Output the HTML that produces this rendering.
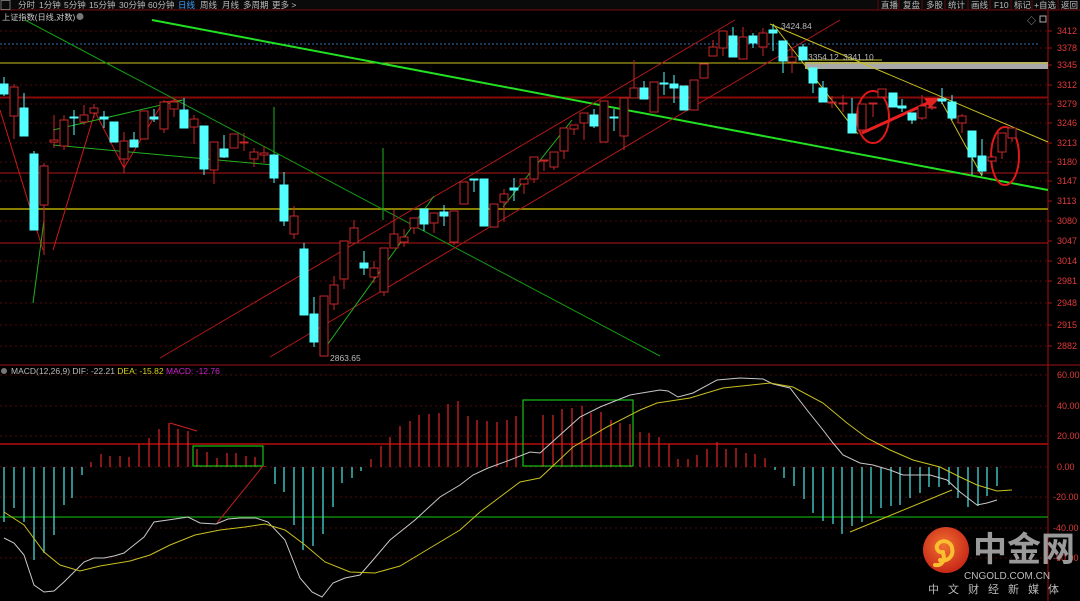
<!DOCTYPE html>
<html><head><meta charset="utf-8"><style>
html,body{margin:0;padding:0;background:#000;width:1080px;height:601px;overflow:hidden;font-family:"Liberation Sans","Noto Sans CJK SC",sans-serif}
svg{position:absolute;left:0;top:0}
.t{font-family:"Liberation Sans","Noto Sans CJK SC",sans-serif}
</style></head><body>
<svg width="1080" height="601" viewBox="0 0 1080 601" xmlns="http://www.w3.org/2000/svg">
<rect width="1080" height="601" fill="#000"/>
<rect x="0" y="0" width="1080" height="10" fill="#0a0a0a"/>
<line x1="0" y1="10" x2="1080" y2="10" stroke="#7a0c0c" stroke-width="1"/>
<rect x="1" y="0.5" width="9" height="9" fill="none" stroke="#888" stroke-width="0.8"/>
<g class="t" font-size="8.5" fill="#bbb">
<text x="18" y="8">分时</text><text x="39" y="8">1分钟</text><text x="64" y="8">5分钟</text><text x="89" y="8">15分钟</text><text x="119" y="8">30分钟</text><text x="148" y="8">60分钟</text>
<text x="178" y="8" fill="#3aa0ff">日线</text><text x="200" y="8">周线</text><text x="222" y="8">月线</text><text x="243" y="8">多周期</text><text x="272" y="8">更多 &gt;</text>
<text x="881" y="8">直播</text><text x="903" y="8">复盘</text><text x="926" y="8">多股</text><text x="948" y="8">统计</text><text x="971" y="8">画线</text><text x="994" y="8">F10</text><text x="1014" y="8">标记</text><text x="1034" y="8">+自选</text><text x="1061" y="8">返回</text>
</g>
<g stroke="#5a0a0a" stroke-width="1"><line x1="878" y1="0" x2="878" y2="10"/><line x1="899" y1="0" x2="899" y2="10"/><line x1="922" y1="0" x2="922" y2="10"/><line x1="945" y1="0" x2="945" y2="10"/><line x1="968" y1="0" x2="968" y2="10"/><line x1="990" y1="0" x2="990" y2="10"/><line x1="1011" y1="0" x2="1011" y2="10"/><line x1="1032" y1="0" x2="1032" y2="10"/><line x1="1058" y1="0" x2="1058" y2="10"/></g>
<text class="t" x="2" y="20" font-size="8.2" fill="#ccc">上证指数(日线,对数)</text>
<circle cx="80" cy="16.5" r="3.5" fill="#777"/>
<line x1="1048" y1="10" x2="1048" y2="601" stroke="#a01010" stroke-width="1"/>
<line x1="0" y1="365" x2="1080" y2="365" stroke="#a01010" stroke-width="1"/>
<text x="1027" y="24" font-size="9" fill="#aaa">◇</text><rect x="1040" y="16" width="6" height="6" fill="none" stroke="#aaa" stroke-width="1"/>
<g stroke="#6a0e0e" stroke-width="0.8" stroke-dasharray="2,3">
<line x1="0" y1="31" x2="1048" y2="31"/><line x1="0" y1="48" x2="1048" y2="48"/><line x1="0" y1="85" x2="1048" y2="85"/><line x1="0" y1="104" x2="1048" y2="104"/><line x1="0" y1="123" x2="1048" y2="123"/><line x1="0" y1="143" x2="1048" y2="143"/><line x1="0" y1="162" x2="1048" y2="162"/><line x1="0" y1="181" x2="1048" y2="181"/><line x1="0" y1="221" x2="1048" y2="221"/><line x1="0" y1="261" x2="1048" y2="261"/><line x1="0" y1="281" x2="1048" y2="281"/><line x1="0" y1="303" x2="1048" y2="303"/><line x1="0" y1="325" x2="1048" y2="325"/><line x1="0" y1="346" x2="1048" y2="346"/>
<line x1="0" y1="375" x2="1048" y2="375"/><line x1="0" y1="406" x2="1048" y2="406"/><line x1="0" y1="436" x2="1048" y2="436"/><line x1="0" y1="467" x2="1048" y2="467"/><line x1="0" y1="497" x2="1048" y2="497"/><line x1="0" y1="528" x2="1048" y2="528"/><line x1="0" y1="558" x2="1048" y2="558"/>
</g>
<line x1="0" y1="44" x2="1040" y2="44" stroke="#2a5a8a" stroke-width="1.2" stroke-dasharray="2,2"/>
<g class="t" font-size="9" fill="#e03a3a">
<text x="1057" y="34">3412</text><text x="1057" y="51">3378</text><text x="1057" y="68">3345</text><text x="1057" y="88">3312</text><text x="1057" y="107">3279</text><text x="1057" y="126">3246</text><text x="1057" y="146">3213</text><text x="1057" y="165">3180</text><text x="1057" y="184">3147</text><text x="1057" y="204">3113</text><text x="1057" y="224">3080</text><text x="1057" y="244">3047</text><text x="1057" y="264">3014</text><text x="1057" y="284">2981</text><text x="1057" y="306">2948</text><text x="1057" y="328">2915</text><text x="1057" y="349">2882</text>
<text x="1057" y="378">60.00</text><text x="1057" y="409">40.00</text><text x="1057" y="439">20.00</text><text x="1057" y="470">0.00</text><text x="1053" y="500">-20.00</text><text x="1053" y="531">-40.00</text><text x="1053" y="561">-60.00</text>
</g>
<g stroke="#a01010"><line x1="1048" y1="31" x2="1052" y2="31"/><line x1="1048" y1="48" x2="1052" y2="48"/><line x1="1048" y1="65" x2="1052" y2="65"/><line x1="1048" y1="85" x2="1052" y2="85"/><line x1="1048" y1="104" x2="1052" y2="104"/><line x1="1048" y1="123" x2="1052" y2="123"/><line x1="1048" y1="143" x2="1052" y2="143"/><line x1="1048" y1="162" x2="1052" y2="162"/><line x1="1048" y1="181" x2="1052" y2="181"/><line x1="1048" y1="201" x2="1052" y2="201"/><line x1="1048" y1="221" x2="1052" y2="221"/><line x1="1048" y1="241" x2="1052" y2="241"/><line x1="1048" y1="261" x2="1052" y2="261"/><line x1="1048" y1="281" x2="1052" y2="281"/><line x1="1048" y1="303" x2="1052" y2="303"/><line x1="1048" y1="325" x2="1052" y2="325"/><line x1="1048" y1="346" x2="1052" y2="346"/></g>
<rect x="805" y="62" width="243" height="7" fill="#a8a8a8"/>
<line x1="0" y1="63" x2="1048" y2="63" stroke="#c8c020" stroke-width="1"/>
<line x1="0" y1="97.5" x2="1048" y2="97.5" stroke="#8a0a0a" stroke-width="2"/>
<line x1="0" y1="173" x2="1048" y2="173" stroke="#b01818" stroke-width="1"/>
<line x1="0" y1="209" x2="1048" y2="209" stroke="#8a8000" stroke-width="2"/>
<line x1="0" y1="243" x2="1048" y2="243" stroke="#b01818" stroke-width="1"/>
<line x1="152" y1="20" x2="1048" y2="190" stroke="#22e022" stroke-width="2"/>
<line x1="25" y1="20" x2="660" y2="356" stroke="#139a13" stroke-width="1"/>
<line x1="160" y1="358" x2="735" y2="20" stroke="#b01818" stroke-width="1"/>
<line x1="270" y1="357" x2="840" y2="20" stroke="#b01818" stroke-width="1"/>
<g stroke="#d01818" stroke-width="1" fill="none"><polyline points="0,110 43,250"/><polyline points="53,250 95,112 124,168 163,102 182,100"/></g>
<g stroke="#20b020" stroke-width="1" fill="none">
<line x1="53" y1="130" x2="183" y2="100"/><line x1="53" y1="145" x2="273" y2="165"/><line x1="33" y1="303" x2="44" y2="220"/>
<line x1="274" y1="107" x2="274" y2="155"/><line x1="383" y1="148" x2="383" y2="220"/>
<line x1="320" y1="355" x2="434" y2="196"/><line x1="503" y1="207" x2="572" y2="120"/>
</g>
<g stroke="#c8c020" stroke-width="1" fill="none">
<line x1="770" y1="24" x2="1048" y2="142"/><polyline points="773,24 858,134"/><polyline points="940,99 982,176"/><line x1="803" y1="60" x2="882" y2="60"/>
</g>
<ellipse cx="873" cy="117" rx="16" ry="26" fill="none" stroke="#e01818" stroke-width="2"/>
<ellipse cx="1005" cy="156" rx="14" ry="29" fill="none" stroke="#e01818" stroke-width="2"/>
<line x1="862" y1="133" x2="930" y2="102" stroke="#e82020" stroke-width="3"/>
<polygon points="940,98 924,98 930,108" fill="#e82020"/>
<g class="t" font-size="8.5" fill="#bbb"><text x="781" y="29">3424.84</text><text x="330" y="361">2863.65</text><text x="808" y="60">3354.12</text><text x="843" y="60">3341.10</text></g>
<g stroke="#c8282a" stroke-width="1" fill="#000">
<line x1="14" y1="84" x2="14" y2="139"/><rect x="10" y="87" width="8" height="29"/>
<line x1="44" y1="163" x2="44" y2="255"/><rect x="40" y="166" width="8" height="39"/>
<line x1="54" y1="115" x2="54" y2="148"/><rect x="50" y="140" width="8" height="2"/>
<line x1="64" y1="115" x2="64" y2="150"/><rect x="60" y="120" width="8" height="26"/>
<line x1="84" y1="105" x2="84" y2="125"/><rect x="80" y="115" width="8" height="7"/>
<line x1="94" y1="104" x2="94" y2="118"/><rect x="90" y="108" width="8" height="5"/>
<line x1="124" y1="132" x2="124" y2="173"/><rect x="120" y="141" width="8" height="18"/>
<rect x="140" y="111" width="8" height="28"/>
<line x1="164" y1="100" x2="164" y2="133"/><rect x="160" y="102" width="8" height="27"/>
<line x1="174" y1="98" x2="174" y2="117"/><rect x="170" y="102" width="8" height="7"/>
<line x1="194" y1="115" x2="194" y2="144"/><rect x="190" y="119" width="8" height="8"/>
<line x1="214" y1="142" x2="214" y2="184"/><rect x="210" y="142" width="8" height="28"/>
<rect x="230" y="134" width="8" height="14"/>
<line x1="244" y1="133" x2="244" y2="151"/><rect x="240" y="142" width="8" height="1"/>
<line x1="254" y1="148" x2="254" y2="167"/><rect x="250" y="152" width="8" height="7"/>
<line x1="264" y1="146" x2="264" y2="163"/><rect x="260" y="153" width="8" height="2"/>
<line x1="294" y1="206" x2="294" y2="239"/><rect x="290" y="216" width="8" height="18"/>
<rect x="320" y="296" width="8" height="60"/>
<line x1="334" y1="276" x2="334" y2="310"/><rect x="330" y="285" width="8" height="19"/>
<line x1="344" y1="241" x2="344" y2="289"/><rect x="340" y="241" width="8" height="38"/>
<line x1="354" y1="220" x2="354" y2="243"/><rect x="350" y="228" width="8" height="15"/>
<line x1="374" y1="261" x2="374" y2="283"/><rect x="370" y="268" width="8" height="9"/>
<line x1="384" y1="248" x2="384" y2="296"/><rect x="380" y="248" width="8" height="44"/>
<line x1="394" y1="210" x2="394" y2="248"/><rect x="390" y="234" width="8" height="14"/>
<line x1="404" y1="229" x2="404" y2="247"/><rect x="400" y="237" width="8" height="5"/>
<line x1="414" y1="218" x2="414" y2="234"/><rect x="410" y="218" width="8" height="10"/>
<line x1="434" y1="213" x2="434" y2="233"/><rect x="430" y="213" width="8" height="10"/>
<line x1="454" y1="211" x2="454" y2="245"/><rect x="450" y="211" width="8" height="31"/>
<rect x="460" y="182" width="8" height="22"/>
<rect x="490" y="204" width="8" height="23"/>
<line x1="504" y1="189" x2="504" y2="222"/><rect x="500" y="194" width="8" height="8"/>
<line x1="524" y1="179" x2="524" y2="194"/><rect x="520" y="179" width="8" height="5"/>
<line x1="534" y1="157" x2="534" y2="183"/><rect x="530" y="157" width="8" height="22"/>
<line x1="544" y1="160" x2="544" y2="171"/><rect x="540" y="160" width="8" height="1"/>
<line x1="554" y1="152" x2="554" y2="170"/><rect x="550" y="152" width="8" height="15"/>
<line x1="564" y1="128" x2="564" y2="159"/><rect x="560" y="128" width="8" height="23"/>
<line x1="574" y1="125" x2="574" y2="135"/><rect x="570" y="125" width="8" height="4"/>
<line x1="584" y1="113" x2="584" y2="140"/><rect x="580" y="113" width="8" height="10"/>
<rect x="600" y="101" width="8" height="41"/>
<line x1="624" y1="98" x2="624" y2="150"/><rect x="620" y="98" width="8" height="38"/>
<line x1="634" y1="60" x2="634" y2="98"/><rect x="630" y="88" width="8" height="10"/>
<rect x="650" y="82" width="8" height="30"/>
<rect x="690" y="80" width="8" height="30"/>
<rect x="700" y="64" width="8" height="14"/>
<line x1="713" y1="40" x2="713" y2="56"/><rect x="709" y="47" width="8" height="9"/>
<line x1="723" y1="31" x2="723" y2="56"/><rect x="719" y="31" width="8" height="17"/>
<line x1="743" y1="27" x2="743" y2="59"/><rect x="739" y="37" width="8" height="22"/>
<line x1="763" y1="28" x2="763" y2="56"/><rect x="759" y="33" width="8" height="14"/>
<line x1="792" y1="48" x2="792" y2="73"/><rect x="788" y="57" width="8" height="5"/>
<line x1="832" y1="96" x2="832" y2="108"/><rect x="828" y="102" width="8" height="1"/>
<line x1="843" y1="95" x2="843" y2="112"/><rect x="839" y="103" width="8" height="1"/>
<line x1="862" y1="104" x2="862" y2="132"/><rect x="858" y="104" width="8" height="26"/>
<line x1="873" y1="103" x2="873" y2="117"/><rect x="869" y="103" width="8" height="1"/>
<rect x="878" y="89" width="8" height="8"/>
<line x1="922" y1="95" x2="922" y2="120"/><rect x="918" y="106" width="8" height="12"/>
<line x1="932" y1="100" x2="932" y2="110"/><rect x="928" y="107" width="8" height="1"/>
<line x1="962" y1="114" x2="962" y2="133"/><rect x="958" y="116" width="8" height="7"/>
<line x1="992" y1="155" x2="992" y2="165"/><rect x="988" y="157" width="8" height="4"/>
<line x1="1002" y1="133" x2="1002" y2="159"/><rect x="998" y="133" width="8" height="19"/>
<line x1="1012" y1="128" x2="1012" y2="142"/><rect x="1008" y="128" width="8" height="10"/>
</g>
<g stroke="#54ffff" stroke-width="1" fill="#54ffff">
<line x1="4" y1="77" x2="4" y2="96"/><rect x="0" y="84" width="8" height="10"/>
<line x1="24" y1="93" x2="24" y2="136"/><rect x="20" y="108" width="8" height="28"/>
<line x1="34" y1="151" x2="34" y2="230"/><rect x="30" y="154" width="8" height="76"/>
<line x1="74" y1="110" x2="74" y2="135"/><rect x="70" y="117" width="8" height="1"/>
<line x1="104" y1="111" x2="104" y2="128"/><rect x="100" y="117" width="8" height="2"/>
<rect x="110" y="122" width="8" height="20"/>
<line x1="134" y1="132" x2="134" y2="147"/><rect x="130" y="140" width="8" height="7"/>
<line x1="154" y1="109" x2="154" y2="122"/><rect x="150" y="117" width="8" height="2"/>
<line x1="184" y1="98" x2="184" y2="128"/><rect x="180" y="110" width="8" height="18"/>
<line x1="204" y1="126" x2="204" y2="175"/><rect x="200" y="126" width="8" height="43"/>
<line x1="224" y1="135" x2="224" y2="158"/><rect x="220" y="149" width="8" height="8"/>
<line x1="274" y1="155" x2="274" y2="183"/><rect x="270" y="155" width="8" height="23"/>
<line x1="284" y1="172" x2="284" y2="226"/><rect x="280" y="185" width="8" height="36"/>
<line x1="304" y1="243" x2="304" y2="315"/><rect x="300" y="249" width="8" height="66"/>
<line x1="314" y1="297" x2="314" y2="347"/><rect x="310" y="314" width="8" height="28"/>
<line x1="364" y1="251" x2="364" y2="275"/><rect x="360" y="263" width="8" height="5"/>
<line x1="424" y1="209" x2="424" y2="231"/><rect x="420" y="209" width="8" height="15"/>
<line x1="444" y1="205" x2="444" y2="226"/><rect x="440" y="212" width="8" height="4"/>
<line x1="474" y1="179" x2="474" y2="192"/><rect x="470" y="179" width="8" height="1"/>
<rect x="480" y="179" width="8" height="47"/>
<line x1="514" y1="178" x2="514" y2="201"/><rect x="510" y="188" width="8" height="2"/>
<line x1="594" y1="109" x2="594" y2="128"/><rect x="590" y="115" width="8" height="11"/>
<line x1="614" y1="109" x2="614" y2="131"/><rect x="610" y="117" width="8" height="1"/>
<line x1="644" y1="81" x2="644" y2="99"/><rect x="640" y="88" width="8" height="11"/>
<line x1="664" y1="72" x2="664" y2="95"/><rect x="660" y="83" width="8" height="1"/>
<line x1="674" y1="75" x2="674" y2="103"/><rect x="670" y="84" width="8" height="4"/>
<rect x="680" y="86" width="8" height="24"/>
<line x1="733" y1="27" x2="733" y2="57"/><rect x="729" y="36" width="8" height="21"/>
<line x1="753" y1="33" x2="753" y2="48"/><rect x="749" y="36" width="8" height="7"/>
<line x1="773" y1="25" x2="773" y2="51"/><rect x="769" y="30" width="8" height="3"/>
<line x1="783" y1="41" x2="783" y2="73"/><rect x="779" y="41" width="8" height="20"/>
<line x1="803" y1="44" x2="803" y2="60"/><rect x="799" y="47" width="8" height="13"/>
<line x1="813" y1="68" x2="813" y2="93"/><rect x="809" y="68" width="8" height="15"/>
<line x1="823" y1="81" x2="823" y2="102"/><rect x="819" y="88" width="8" height="14"/>
<line x1="852" y1="98" x2="852" y2="133"/><rect x="848" y="114" width="8" height="19"/>
<rect x="889" y="93" width="8" height="14"/>
<line x1="902" y1="99" x2="902" y2="112"/><rect x="898" y="106" width="8" height="2"/>
<line x1="912" y1="113" x2="912" y2="124"/><rect x="908" y="113" width="8" height="7"/>
<line x1="942" y1="88" x2="942" y2="104"/><rect x="938" y="99" width="8" height="2"/>
<line x1="952" y1="95" x2="952" y2="120"/><rect x="948" y="102" width="8" height="16"/>
<line x1="972" y1="131" x2="972" y2="175"/><rect x="968" y="131" width="8" height="26"/>
<line x1="982" y1="139" x2="982" y2="175"/><rect x="978" y="156" width="8" height="15"/>
</g>
<circle cx="4" cy="371" r="3" fill="#777"/>
<text class="t" x="11" y="374" font-size="8.5" fill="#bbb">MACD(12,26,9) DIF: -22.21 <tspan fill="#d8d020">DEA: -15.82</tspan> <tspan fill="#d020d0">MACD: -12.76</tspan></text>
<line x1="0" y1="444" x2="1048" y2="444" stroke="#8a0a0a" stroke-width="2"/>
<line x1="0" y1="517" x2="1048" y2="517" stroke="#10a010" stroke-width="1.2"/>
<g stroke="#48d8d8" stroke-width="1.3">
<line x1="4" y1="467" x2="4" y2="522"/><line x1="14" y1="467" x2="14" y2="508"/><line x1="24" y1="467" x2="24" y2="522"/><line x1="34" y1="467" x2="34" y2="560"/><line x1="44" y1="467" x2="44" y2="553"/><line x1="54" y1="467" x2="54" y2="535"/><line x1="64" y1="467" x2="64" y2="505"/><line x1="72" y1="467" x2="72" y2="498"/><line x1="82" y1="467" x2="82" y2="475"/>
<line x1="275" y1="467" x2="275" y2="484"/><line x1="284" y1="467" x2="284" y2="492"/><line x1="294" y1="467" x2="294" y2="525"/><line x1="303" y1="467" x2="303" y2="550"/><line x1="313" y1="467" x2="313" y2="546"/><line x1="323" y1="467" x2="323" y2="534"/><line x1="333" y1="467" x2="333" y2="507"/><line x1="342" y1="467" x2="342" y2="483"/><line x1="352" y1="467" x2="352" y2="478"/><line x1="361" y1="467" x2="361" y2="471"/>
<line x1="775" y1="467" x2="775" y2="470"/><line x1="784" y1="467" x2="784" y2="478"/><line x1="794" y1="467" x2="794" y2="486"/><line x1="804" y1="467" x2="804" y2="499"/><line x1="813" y1="467" x2="813" y2="513"/><line x1="823" y1="467" x2="823" y2="521"/><line x1="833" y1="467" x2="833" y2="524"/><line x1="842" y1="467" x2="842" y2="534"/><line x1="852" y1="467" x2="852" y2="526"/><line x1="862" y1="467" x2="862" y2="522"/><line x1="871" y1="467" x2="871" y2="514"/><line x1="881" y1="467" x2="881" y2="508"/><line x1="891" y1="467" x2="891" y2="506"/><line x1="900" y1="467" x2="900" y2="505"/><line x1="910" y1="467" x2="910" y2="498"/><line x1="920" y1="467" x2="920" y2="493"/><line x1="929" y1="467" x2="929" y2="487"/><line x1="939" y1="467" x2="939" y2="487"/><line x1="949" y1="467" x2="949" y2="485"/><line x1="958" y1="467" x2="958" y2="498"/><line x1="968" y1="467" x2="968" y2="507"/><line x1="978" y1="467" x2="978" y2="506"/><line x1="987" y1="467" x2="987" y2="496"/><line x1="997" y1="467" x2="997" y2="486"/>
</g>
<g stroke="#d02424" stroke-width="1.3">
<line x1="91" y1="467" x2="91" y2="462"/><line x1="101" y1="467" x2="101" y2="454"/><line x1="110" y1="467" x2="110" y2="456"/><line x1="120" y1="467" x2="120" y2="456"/><line x1="129" y1="467" x2="129" y2="457"/><line x1="139" y1="467" x2="139" y2="444"/><line x1="149" y1="467" x2="149" y2="438"/><line x1="159" y1="467" x2="159" y2="429"/><line x1="169" y1="467" x2="169" y2="423"/><line x1="178" y1="467" x2="178" y2="429"/><line x1="188" y1="467" x2="188" y2="431"/><line x1="197" y1="467" x2="197" y2="449"/><line x1="207" y1="467" x2="207" y2="452"/><line x1="217" y1="467" x2="217" y2="458"/><line x1="227" y1="467" x2="227" y2="453"/><line x1="236" y1="467" x2="236" y2="453"/><line x1="246" y1="467" x2="246" y2="456"/><line x1="255" y1="467" x2="255" y2="457"/><line x1="265" y1="467" x2="265" y2="466"/>
<line x1="371" y1="467" x2="371" y2="459"/><line x1="381" y1="467" x2="381" y2="446"/><line x1="390" y1="467" x2="390" y2="437"/><line x1="400" y1="467" x2="400" y2="426"/><line x1="410" y1="467" x2="410" y2="421"/><line x1="419" y1="467" x2="419" y2="415"/><line x1="429" y1="467" x2="429" y2="414"/><line x1="439" y1="467" x2="439" y2="413"/><line x1="448" y1="467" x2="448" y2="404"/><line x1="458" y1="467" x2="458" y2="401"/><line x1="468" y1="467" x2="468" y2="416"/><line x1="477" y1="467" x2="477" y2="420"/><line x1="487" y1="467" x2="487" y2="421"/><line x1="497" y1="467" x2="497" y2="422"/><line x1="507" y1="467" x2="507" y2="420"/><line x1="516" y1="467" x2="516" y2="416"/>
<line x1="543" y1="467" x2="543" y2="415"/><line x1="553" y1="467" x2="553" y2="415"/><line x1="562" y1="467" x2="562" y2="409"/><line x1="572" y1="467" x2="572" y2="408"/><line x1="582" y1="467" x2="582" y2="406"/><line x1="591" y1="467" x2="591" y2="413"/><line x1="601" y1="467" x2="601" y2="412"/><line x1="611" y1="467" x2="611" y2="420"/><line x1="620" y1="467" x2="620" y2="423"/><line x1="630" y1="467" x2="630" y2="424"/><line x1="640" y1="467" x2="640" y2="432"/><line x1="649" y1="467" x2="649" y2="433"/><line x1="659" y1="467" x2="659" y2="437"/><line x1="669" y1="467" x2="669" y2="444"/><line x1="678" y1="467" x2="678" y2="459"/><line x1="688" y1="467" x2="688" y2="459"/><line x1="697" y1="467" x2="697" y2="455"/><line x1="707" y1="467" x2="707" y2="449"/><line x1="717" y1="467" x2="717" y2="442"/><line x1="726" y1="467" x2="726" y2="449"/><line x1="736" y1="467" x2="736" y2="448"/><line x1="746" y1="467" x2="746" y2="453"/><line x1="755" y1="467" x2="755" y2="454"/><line x1="765" y1="467" x2="765" y2="458"/>
</g>
<rect x="193" y="446" width="70" height="20" fill="none" stroke="#18c018" stroke-width="1.2"/>
<rect x="523" y="400" width="110" height="66" fill="none" stroke="#18c018" stroke-width="1.2"/>
<line x1="170" y1="423" x2="197" y2="431" stroke="#d02020"/>
<line x1="217" y1="523" x2="263" y2="466" stroke="#c02020"/>
<line x1="850" y1="532" x2="952" y2="490" stroke="#c8c020"/>
<polyline fill="none" stroke="#c8c8c8" stroke-width="1" points="4,538 14,543 24,555 34,585 44,592 54,591 64,582 74,572 84,562 94,558 104,558 114,556 124,553 134,545 144,537 154,522 168,520 188,517 200,523 216,524 228,519 240,518 256,518 268,522 285,540 300,578 312,592 322,597 333,583 345,578 360,575 373,560 390,540 415,520 440,497 460,485 473,475 488,468 510,460 530,452 540,453 560,435 580,417 600,407 630,395 660,390 668,391 678,397 693,393 717,380 740,378 763,379 773,384 790,388 807,410 823,430 833,443 843,455 860,463 873,465 890,470 903,475 930,475 947,480 960,492 977,505 987,503 997,500"/>
<polyline fill="none" stroke="#c8c020" stroke-width="1" points="4,512 24,525 44,552 60,565 80,571 100,566 130,561 150,555 170,545 195,535 220,530 245,527 265,524 285,530 305,545 325,562 350,572 375,573 400,566 430,548 460,530 480,512 500,497 520,482 540,478 573,447 607,427 640,410 657,403 690,398 723,388 770,383 793,387 823,403 847,423 867,438 890,450 913,460 940,467 960,477 977,485 997,491 1012,490"/>
<defs><radialGradient id="g" cx="0.45" cy="0.4" r="0.6"><stop offset="0" stop-color="#f07030"/><stop offset="1" stop-color="#c82818"/></radialGradient></defs>
<circle cx="946" cy="550" r="23" fill="url(#g)"/>
<path d="M940,560 c8,2 14,-4 12,-12 c-1,-7 -10,-9 -14,-4 c-3,4 0,9 5,8 M943,553 c3,8 -2,13 -8,12" fill="none" stroke="#f8c030" stroke-width="4" stroke-linecap="round"/>
<text x="973" y="561" font-family="'Noto Sans CJK SC','WenQuanYi Zen Hei',sans-serif" font-size="34" font-weight="bold" fill="#9a9a9a">中金网</text>
<text class="t" x="964" y="579" font-size="10" fill="#bbb">CNGOLD.COM.CN</text>
<text x="928" y="593" font-family="'Noto Sans CJK SC',sans-serif" font-size="11" fill="#bbb" letter-spacing="9">中文财经新媒体</text>
</svg>
</body></html>
